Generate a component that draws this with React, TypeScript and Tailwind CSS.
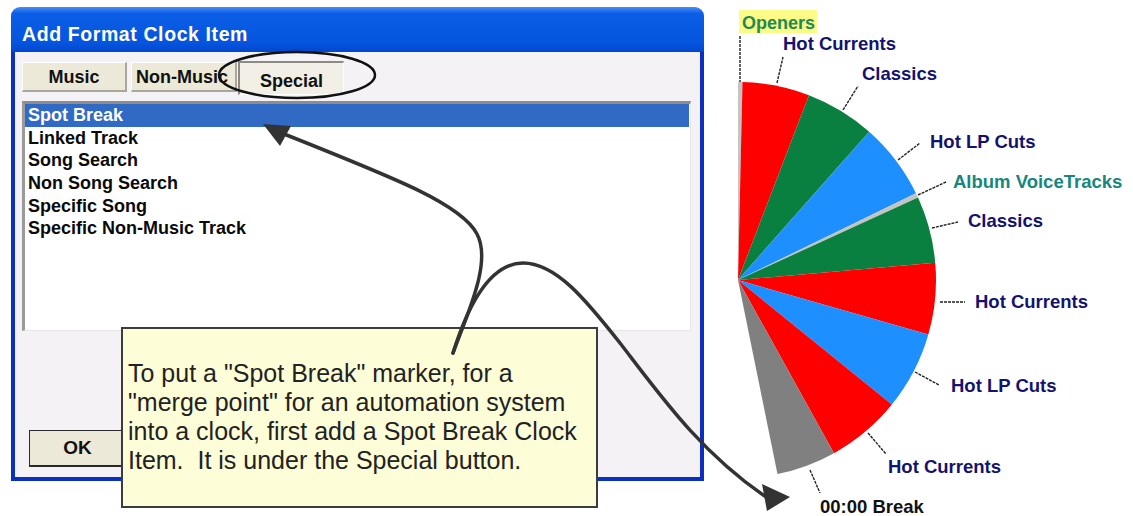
import React from "react";

const CX = 738;
const CY = 280;
const R = 198;

function pt(a: number, r: number = R): [number, number] {
  const rad = (a * Math.PI) / 180;
  return [CX + r * Math.sin(rad), CY - r * Math.cos(rad)];
}

const slices: [number, number, string][] = [
  [0, 1.3, "#c4c4c4"],
  [1.3, 21, "#ff0000"],
  [21, 41.5, "#0a8040"],
  [41.5, 64, "#1e8fff"],
  [64, 65.4, "#c4c4c4"],
  [65.4, 85, "#0a8040"],
  [85, 106, "#ff0000"],
  [106, 129, "#1e8fff"],
  [129, 151, "#ff0000"],
  [151, 168.5, "#808080"],
];

function slicePath(a0: number, a1: number) {
  const [x0, y0] = pt(a0);
  const [x1, y1] = pt(a1);
  return `M ${CX} ${CY} L ${x0} ${y0} A ${R} ${R} 0 0 1 ${x1} ${y1} Z`;
}

const NAVY = "#13136e";

const labels: { t: string; x: number; y: number; c: string }[] = [
  { t: "Hot Currents", x: 783, y: 50, c: NAVY },
  { t: "Classics", x: 862, y: 80, c: NAVY },
  { t: "Hot LP Cuts", x: 930, y: 148, c: NAVY },
  { t: "Album VoiceTracks", x: 953, y: 188, c: "#16877c" },
  { t: "Classics", x: 968, y: 227, c: NAVY },
  { t: "Hot Currents", x: 975, y: 308, c: NAVY },
  { t: "Hot LP Cuts", x: 951, y: 392, c: NAVY },
  { t: "Hot Currents", x: 888, y: 473, c: NAVY },
  { t: "00:00 Break", x: 820, y: 513, c: "#111111" },
];

const leaders: [number, number, number, number][] = [
  [740, 36, 740, 82],
  [777, 83, 783, 57],
  [843, 110, 858, 86],
  [898, 160, 920, 143],
  [918, 195, 946, 182],
  [932, 228, 958, 222],
  [940, 302, 965, 302],
  [915, 372, 939, 385],
  [868, 433, 886, 454],
  [810, 470, 820, 493],
];

const items = [
  "Spot Break",
  "Linked Track",
  "Song Search",
  "Non Song Search",
  "Specific Song",
  "Specific Non-Music Track",
];

function PieChart() {
  return (
    <svg
      width={429}
      height={516}
      viewBox="704 0 429 516"
      className="shrink-0 font-['Liberation_Sans',Arial,sans-serif] font-bold"
    >
      {slices.map(([a0, a1, c], i) => (
        <path key={i} d={slicePath(a0, a1)} fill={c} />
      ))}
      {leaders.map(([x1, y1, x2, y2], i) => (
        <line key={i} x1={x1} y1={y1} x2={x2} y2={y2} stroke="#222" strokeWidth={1.4} strokeDasharray="3 1" />
      ))}
      <rect x={739} y={10} width={78} height={23} fill="#fbfb86" />
      <text x={742} y={29} fill="#1f8a55" fontSize={18}>
        Openers
      </text>
      {labels.map((l, i) => (
        <text key={i} x={l.x} y={l.y} fill={l.c} fontSize={18.5}>
          {l.t}
        </text>
      ))}
    </svg>
  );
}

function Window() {
  return (
    <div className="mt-[7px] ml-[11px] w-[693px] h-[474px] shrink-0 flex flex-col font-['Liberation_Sans',Arial,sans-serif]">
      <div className="h-[45px] rounded-t-[9px] bg-[linear-gradient(to_bottom,#4a8ef6_0%,#0c5ee6_14%,#0555de_80%,#0346cc_100%)] pl-[11px] pt-[17px]">
        <div className="text-white font-bold text-[19.5px] leading-[20px] tracking-[0.6px]">Add Format Clock Item</div>
      </div>
      <div className="flex-1 flex flex-col bg-[#f4f2f5] border-x-4 border-b-4 border-[#0a2fc2] pl-[7px] pr-[9px] pt-[9px]">
        <div className="flex items-start h-[34px]">
          <div className="mt-[1px] w-[105px] h-[30px] bg-[#ece9d8] border-t border-l border-white border-b-2 border-r-2 border-b-[#a9a79c] border-r-[#a9a79c] flex items-center justify-center text-[18px] font-bold text-[#111] leading-none">
            Music
          </div>
          <div className="ml-[4px] mt-[1px] w-[106px] h-[30px] bg-[#ece9d8] border-t border-l border-white border-b-2 border-r-2 border-b-[#a9a79c] border-r-[#a9a79c] flex items-center pl-[4px] text-[18px] font-bold text-[#111] leading-none overflow-hidden whitespace-nowrap">
            Non-Music
          </div>
          <div className="ml-[1px] w-[106px] h-[34px] bg-[#f1efe6] border-t-2 border-l-2 border-[#8c8a82] border-b border-r border-b-[#ffffff] border-r-[#ffffff] flex items-center justify-center pt-[4px] text-[18px] font-bold text-[#111] leading-none">
            Special
          </div>
        </div>
        <div className="mt-[6px] h-[230px] bg-white border-t-[3px] border-l-[3px] border-t-[#8d8d8d] border-l-[#9a9a9a] border-b border-r border-b-[#e6e6e6] border-r-[#e6e6e6] pr-[1px]">
          {items.map((it, i) => (
            <div
              key={it}
              className={
                i === 0
                  ? "h-[22.7px] leading-[22.7px] pl-[3px] text-[18px] font-bold text-white bg-[#316ac5] whitespace-nowrap"
                  : "h-[22.7px] leading-[22.7px] pl-[3px] text-[18px] font-bold text-[#0a0a0a] whitespace-nowrap"
              }
            >
              {it}
            </div>
          ))}
        </div>
        <div className="mt-[99px] ml-[7px] w-[98px] h-[37px] bg-[#ece9d8] border border-[#2a2a2a] border-b-2 border-r-2 flex items-center justify-center text-[19px] font-bold text-[#111]">
          OK
        </div>
      </div>
    </div>
  );
}

export default function App() {
  return (
    <div className="relative w-[1133px] h-[516px] bg-white overflow-hidden flex">
      <Window />
      <PieChart />
      <div className="absolute left-[121px] top-[327px] w-[477px] h-[181px] bg-[#fdfdd8] border-2 border-[#3c3c3c] pl-[5px] pt-[30px] font-['Liberation_Sans',Arial,sans-serif] text-[25px] leading-[29px] text-[#222] whitespace-nowrap">
        To put a "Spot Break" marker, for a
        <br />
        "merge point" for an automation system
        <br />
        into a clock, first add a Spot Break Clock
        <br />
        Item.&nbsp; It is under the Special button.
      </div>
      <svg className="absolute left-0 top-0 pointer-events-none" width={1133} height={516} viewBox="0 0 1133 516">
        <ellipse cx={297} cy={75} rx={78} ry={23} fill="none" stroke="#111" strokeWidth={2.5} />
        <path
          d="M 453 353 C 468 312, 492 262, 477 234 C 462 205, 400 180, 284 134"
          fill="none"
          stroke="#333"
          strokeWidth={3.5}
          strokeLinecap="round"
        />
        <polygon points="263,124 291,126 280,146" fill="#333" />
        <path
          d="M 453 353 C 468 305, 490 263, 523 263 C 556 263, 586 300, 620 343 C 660 395, 700 452, 766 497"
          fill="none"
          stroke="#333"
          strokeWidth={3.5}
          strokeLinecap="round"
        />
        <polygon points="790,497 762,484 767,511" fill="#333" />
      </svg>
    </div>
  );
}
